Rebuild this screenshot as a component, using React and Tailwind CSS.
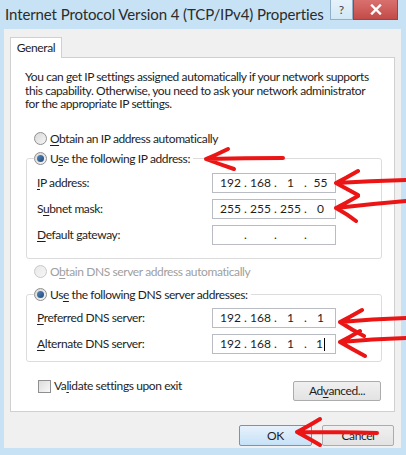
import React from "react";

function Radio({ checked, disabled }) {
  return (
    <span
      className={
        "w-[13px] h-[13px] rounded-full border flex items-center justify-center shrink-0 " +
        (disabled
          ? "border-[#c8c8c8] bg-linear-to-br from-[#e8e8e8] to-[#f7f7f7]"
          : "border-[#8e8f8f] bg-linear-to-br from-[#d8d8d8] to-[#f6f6f6]")
      }
    >
      {checked ? <span className="w-[7px] h-[7px] rounded-full bg-linear-to-br from-[#5a86b8] to-[#1c4a7e]" /> : null}
    </span>
  );
}

function IpBox({ v, caret }) {
  const segs = v || ["", "", "", ""];
  return (
    <div className="w-[124px] h-[20px] border border-[#b9bcc2] bg-white flex items-center pl-[4px] text-[12px] leading-[18px] tracking-normal text-[#1e1e1e]">
      <span className="w-[27px] text-center">{segs[0]}</span>
      <span className="w-[3px] text-center">.</span>
      <span className="w-[27px] text-center">{segs[1]}</span>
      <span className="w-[3px] text-center">.</span>
      <span className="w-[27px] text-center">{segs[2]}</span>
      <span className="w-[3px] text-center">.</span>
      <span className="w-[27px] text-center relative">
        {segs[3]}
        {caret ? <span className="inline-block w-px h-[13px] bg-black align-middle ml-[1px]" /> : null}
      </span>
    </div>
  );
}

function Row({ label, v, caret }) {
  return (
    <div className="h-[20px] flex items-center pl-[3px]">
      <div className="w-[175px] text-[12px] leading-[16px] whitespace-nowrap">{label}</div>
      <IpBox v={v} caret={caret} />
    </div>
  );
}

const U = ({ children }) => <span className="underline underline-offset-[2px]">{children}</span>;

export default function App() {
  return (
    <div className="relative w-[406px] h-[455px] bg-[#c6e2f4] font-['Lato',sans-serif] text-[#1e1e1e] overflow-hidden flex flex-col">
      {/* title bar */}
      <div className="h-[29px] flex items-start shrink-0">
        <div className="flex-1 min-w-0 pl-[5px] pt-[3px] text-[15px] leading-[22px] tracking-[-0.1px] text-[#2b2b2b] whitespace-nowrap">
          Internet Protocol Version 4 (TCP/IPv4) Properties
        </div>
        <div className="w-[23px] h-[20px] shrink-0 border border-t-0 border-[#8fb0c8] bg-linear-to-b from-[#e6f2fb] to-[#d2e7f6] flex items-center justify-center text-[12px] leading-none text-[#444]">
          ?
        </div>
        <div className="w-[45px] h-[20px] shrink-0 mr-[8px] bg-linear-to-b from-[#d9706e] to-[#c24b49] border border-t-0 border-[#a34140] flex items-center justify-center">
          <svg width="12" height="11" viewBox="0 0 12 11">
            <path d="M2 1.5 L10 9.5 M10 1.5 L2 9.5" stroke="#ffffff" strokeWidth="2.4" strokeLinecap="square" />
          </svg>
        </div>
      </div>

      {/* client area */}
      <div className="ml-[4px] mr-[5px] flex-1 bg-[#f0f0f0] pt-[8px] pl-[6px] pr-[6px] flex flex-col tracking-[-0.4px]">
        <div className="relative z-10 w-[52px] h-[21px] -mb-px border border-b-0 border-[#d0d0d0] bg-white flex items-center justify-center text-[12px] leading-[16px]">
          General
        </div>
        <div className="h-[355px] border border-[#d0d0d0] bg-white pl-[14px] pt-[12px] flex flex-col">
          <div className="text-[12px] leading-[13.5px] whitespace-nowrap">
            You can get IP settings assigned automatically if your network supports
            <br />
            this capability. Otherwise, you need to ask your network administrator
            <br />
            for the appropriate IP settings.
          </div>

          <div className="mt-[20px] h-[16px] flex items-center pl-[9px] gap-[3px] text-[12px] leading-[16px]">
            <Radio />
            <span>
              <U>O</U>btain an IP address automatically
            </span>
          </div>

          <fieldset className="mt-[4px] ml-[1px] w-[356px] border border-[#dcdcdc] rounded-[3px] pl-[7px] pb-[13px]">
            <legend className="h-[16px] flex items-center gap-[3px] pr-[3px] text-[12px] leading-[16px]">
              <Radio checked />
              <span>
                U<U>s</U>e the following IP address:
              </span>
            </legend>
            <div className="mt-[6px] flex flex-col gap-[6px]">
              <Row label={<><U>I</U>P address:</>} v={["192", "168", "1", "55"]} />
              <Row label={<>S<U>u</U>bnet mask:</>} v={["255", "255", "255", "0"]} />
              <Row label={<><U>D</U>efault gateway:</>} />
            </div>
          </fieldset>

          <div className="mt-[5px] h-[16px] flex items-center pl-[9px] gap-[3px] text-[12px] leading-[16px] text-[#a0a0a0]">
            <Radio disabled />
            <span>
              O<U>b</U>tain DNS server address automatically
            </span>
          </div>

          <fieldset className="mt-[7px] ml-[1px] w-[356px] border border-[#dcdcdc] rounded-[3px] pl-[7px] pb-[7px]">
            <legend className="h-[16px] flex items-center gap-[3px] pr-[3px] text-[12px] leading-[16px]">
              <Radio checked />
              <span>
                Us<U>e</U> the following DNS server addresses:
              </span>
            </legend>
            <div className="mt-[5px] flex flex-col gap-[6px]">
              <Row label={<><U>P</U>referred DNS server:</>} v={["192", "168", "1", "1"]} />
              <Row label={<><U>A</U>lternate DNS server:</>} v={["192", "168", "1", "1"]} caret />
            </div>
          </fieldset>

          <div className="mt-[18px] flex justify-between items-start pr-[13px]">
            <div className="flex items-center gap-[3px] pl-[13px] h-[13px] text-[12px] leading-[16px]">
              <span className="w-[13px] h-[13px] border border-[#8e8f8f] bg-linear-to-br from-[#dcdcdc] to-[#f8f8f8]" />
              <span>
                Va<U>l</U>idate settings upon exit
              </span>
            </div>
            <div className="mt-[1px] w-[88px] h-[20px] rounded-[2px] border border-[#acacac] bg-linear-to-b from-[#f0f0f0] to-[#e3e3e3] flex items-center justify-center text-[12px] leading-[16px]">
              <span>
                Ad<U>v</U>anced...
              </span>
            </div>
          </div>
        </div>

        <div className="mt-[13px] flex justify-end gap-[10px] pr-[1px]">
          <div className="w-[73px] h-[21px] rounded-[2px] border border-[#5c9bd6] bg-linear-to-b from-[#e7f2fb] to-[#c6e1f7] flex items-center justify-center text-[12px] leading-[16px]">
            OK
          </div>
          <div className="w-[72px] h-[21px] rounded-[2px] border border-[#acacac] bg-linear-to-b from-[#f0f0f0] to-[#e3e3e3] flex items-center justify-center text-[12px] leading-[16px]">
            Cancel
          </div>
        </div>
      </div>
      <div className="h-[7px] shrink-0" />

      {/* red annotation arrows */}
      <svg className="absolute inset-0 pointer-events-none" width="406" height="455" viewBox="0 0 406 455" fill="none">
        <g stroke="#ec1515" strokeWidth="4" strokeLinecap="round" strokeLinejoin="round">
          <path d="M283 158 Q245 158 206 159 M228 149 Q216 155 206 159 Q219 164 234 169" />
          <path d="M406 180 Q370 181 336 183 M358 171 Q346 178 336 183 Q347 189 358 195" />
          <path d="M406 201 Q370 204 336 208 M358 196 Q346 203 336 208 Q347 214 356 221" />
          <path d="M406 318 Q372 319 340 322 M362 310 Q350 317 340 322 Q352 330 364 336" />
          <path d="M406 338 Q372 339 340 342 M360 331 Q350 337 340 342 Q352 349 365 356" />
          <path d="M377 433 Q340 432 297 432 M320 419 Q307 427 297 432 Q308 438 320 445" />
        </g>
      </svg>
    </div>
  );
}
